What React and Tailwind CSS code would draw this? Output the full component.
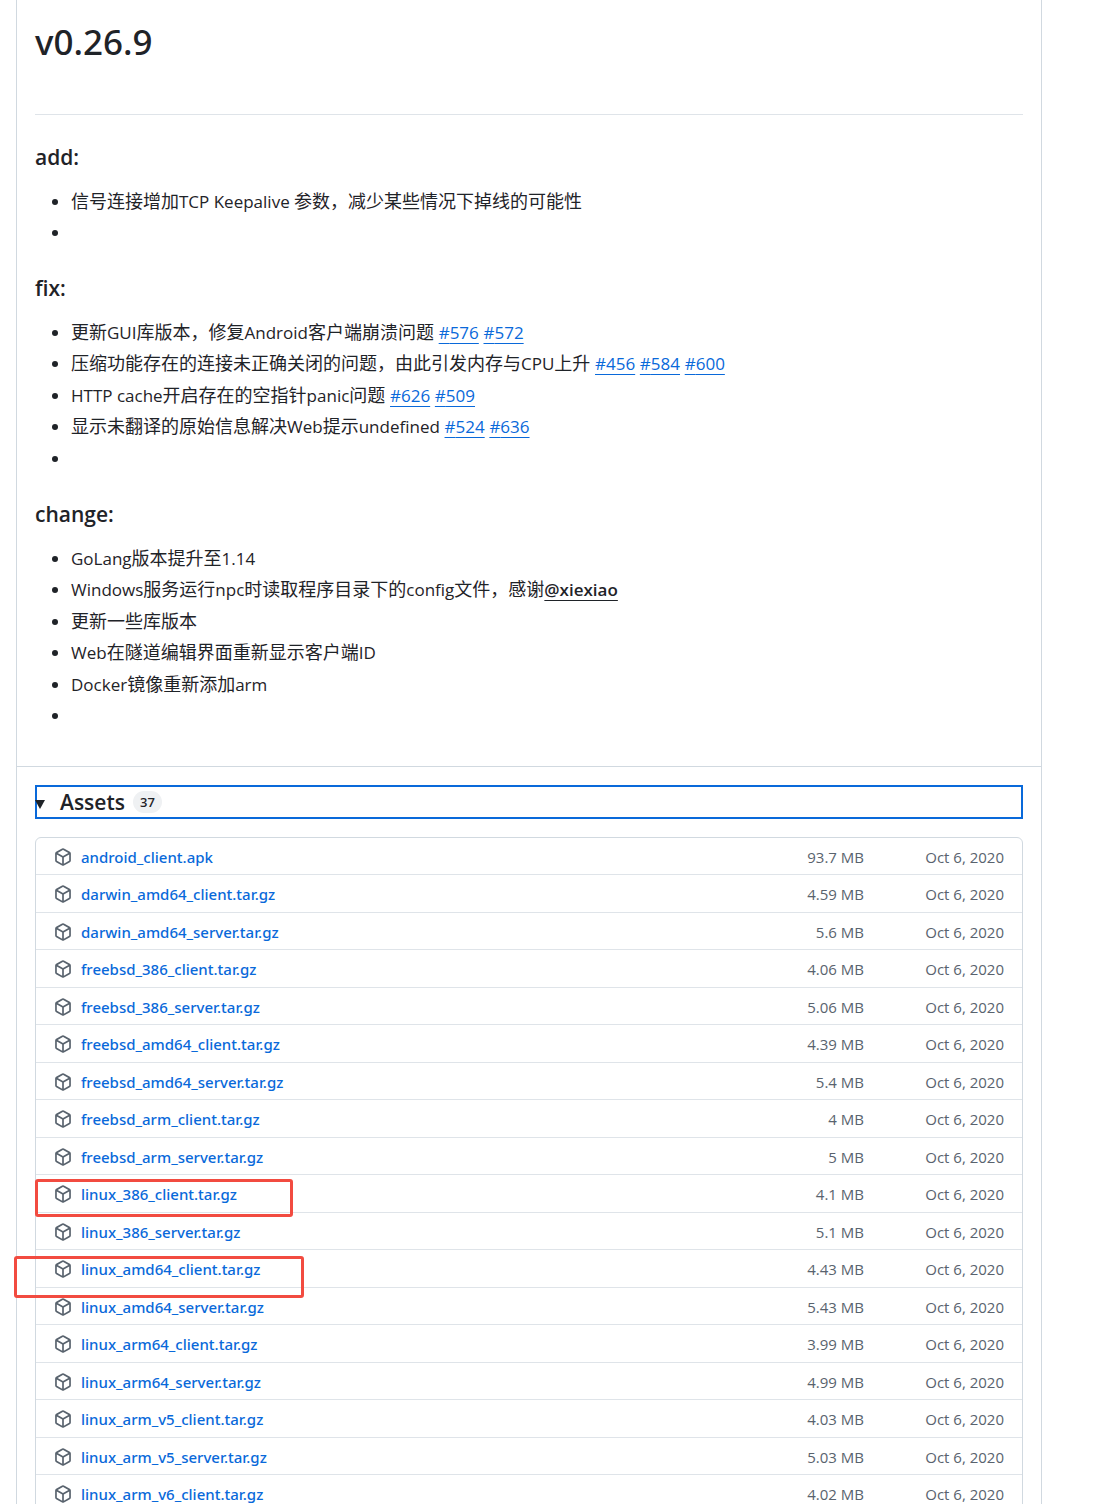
import React from 'react';

const sections = [
  {
    title: 'add:',
    items: [{ text: '信号连接增加TCP Keepalive 参数，减少某些情况下掉线的可能性' }, { text: '' }],
  },
  {
    title: 'fix:',
    items: [
      { text: '更新GUI库版本，修复Android客户端崩溃问题', issues: [576, 572] },
      { text: '压缩功能存在的连接未正确关闭的问题，由此引发内存与CPU上升', issues: [456, 584, 600] },
      { text: 'HTTP cache开启存在的空指针panic问题', issues: [626, 509] },
      { text: '显示未翻译的原始信息解决Web提示undefined', issues: [524, 636] },
      { text: '' },
    ],
  },
  {
    title: 'change:',
    items: [
      { text: 'GoLang版本提升至1.14' },
      { text: 'Windows服务运行npc时读取程序目录下的config文件，感谢', mention: '@xiexiao' },
      { text: '更新一些库版本' },
      { text: 'Web在隧道编辑界面重新显示客户端ID' },
      { text: 'Docker镜像重新添加arm' },
      { text: '' },
    ],
  },
];

const assets = [
  { name: 'android_client.apk', size: '93.7 MB' },
  { name: 'darwin_amd64_client.tar.gz', size: '4.59 MB' },
  { name: 'darwin_amd64_server.tar.gz', size: '5.6 MB' },
  { name: 'freebsd_386_client.tar.gz', size: '4.06 MB' },
  { name: 'freebsd_386_server.tar.gz', size: '5.06 MB' },
  { name: 'freebsd_amd64_client.tar.gz', size: '4.39 MB' },
  { name: 'freebsd_amd64_server.tar.gz', size: '5.4 MB' },
  { name: 'freebsd_arm_client.tar.gz', size: '4 MB' },
  { name: 'freebsd_arm_server.tar.gz', size: '5 MB' },
  { name: 'linux_386_client.tar.gz', size: '4.1 MB', mark: '-left-px top-1 w-[258px] h-[38px]' },
  { name: 'linux_386_server.tar.gz', size: '5.1 MB' },
  { name: 'linux_amd64_client.tar.gz', size: '4.43 MB', mark: '-left-[22px] top-1.5 w-[290px] h-[42px]' },
  { name: 'linux_amd64_server.tar.gz', size: '5.43 MB' },
  { name: 'linux_arm64_client.tar.gz', size: '3.99 MB' },
  { name: 'linux_arm64_server.tar.gz', size: '4.99 MB' },
  { name: 'linux_arm_v5_client.tar.gz', size: '4.03 MB' },
  { name: 'linux_arm_v5_server.tar.gz', size: '5.03 MB' },
  { name: 'linux_arm_v6_client.tar.gz', size: '4.02 MB' },
];

function PackageIcon({ className }) {
  return (
    <svg viewBox="0 0 16 16" fill="currentColor" aria-hidden="true" className={className}>
      <path d="m8.878.392 5.25 3.045c.54.314.872.89.872 1.514v6.098a1.75 1.75 0 0 1-.872 1.514l-5.25 3.045a1.75 1.75 0 0 1-1.756 0l-5.25-3.045A1.75 1.75 0 0 1 1 11.049V4.951c0-.624.332-1.201.872-1.514L7.122.392a1.75 1.75 0 0 1 1.756 0ZM7.875 1.69l-4.63 2.685L8 7.133l4.755-2.758-4.63-2.685a.248.248 0 0 0-.25 0ZM2.5 5.677v5.372c0 .09.047.171.125.216l4.625 2.683V8.432Zm6.25 8.271 4.625-2.683a.25.25 0 0 0 .125-.216V5.677L8.75 8.432Z" />
    </svg>
  );
}

// latin runs are set a step smaller so they sit evenly with the chinese text
function MixedText({ text }) {
  return text.split(/([\x20-\x7e]+)/).map((part, i) =>
    i % 2 ? (
      <span key={i} className="text-[17px]">
        {part}
      </span>
    ) : (
      part
    )
  );
}

function NoteSection({ title, items }) {
  return (
    <section className="mt-[27px]">
      <h2 className="text-[21px] leading-[30px] font-semibold">{title}</h2>
      <ul className="mt-4 list-disc pl-9">
        {items.map((item, i) => (
          <li key={i} className="h-[27px] leading-[27px] even:mt-1 odd:mt-[5px] first:mt-0">
            <MixedText text={item.text} />
            {item.issues?.map((n) => (
              <React.Fragment key={n}>
                {' '}
                <a href={`#${n}`} className="text-[17px] text-[#0969da] underline decoration-1 underline-offset-4">
                  #{n}
                </a>
              </React.Fragment>
            ))}
            {item.mention && (
              <a href="#xiexiao" className="text-[17px] font-semibold underline decoration-1 underline-offset-4">
                {item.mention}
              </a>
            )}
          </li>
        ))}
      </ul>
    </section>
  );
}

function AssetRow({ name, size, mark }) {
  return (
    <tr className="group odd:not-first:h-[37px] even:h-[38px] first:h-9">
      <td className="relative border-t border-[#dfe4e9] p-0 pt-px pl-[18px] group-first:border-t-0">
        <div className="flex items-center">
          <PackageIcon className="size-[18px] shrink-0 text-[#59636e]" />
          <a href={`#${name}`} className="ml-[9px] font-['Noto_Sans',sans-serif] leading-5 font-medium text-[#0969da]">
            {name}
          </a>
        </div>
        {mark && (
          <span className={`pointer-events-none absolute z-10 rounded-[3px] border-3 border-[#f24b40] ${mark}`} />
        )}
      </td>
      <td className="border-t border-[#dfe4e9] p-0 pt-px text-right text-[#59636e] group-first:border-t-0">{size}</td>
      <td className="w-[158px] border-t border-[#dfe4e9] p-0 pt-px pr-[18px] text-right text-[#59636e] group-first:border-t-0">
        Oct 6, 2020
      </td>
    </tr>
  );
}

function App() {
  return (
    <div className="bg-white font-['Open_Sans','Noto_Sans_CJK_SC',sans-serif] text-lg text-[#1f2328]">
      <main className="ml-4 mr-16 min-h-screen border-x border-[#d1d9e0]">
        <div className="px-[18px] pt-5 pb-[37px]">
          <h1 className="font-['Noto_Sans',sans-serif] text-[35px] leading-[43px] font-medium">v0.26.9</h1>
          <hr className="mt-[51px] border-[#dfe4e9]" />
          {sections.map((s) => (
            <NoteSection key={s.title} {...s} />
          ))}
        </div>
        <div className="border-t border-[#d1d9e0] p-[18px]">
          <details open>
            <summary className="flex h-[34px] list-none items-center border-2 border-[#0969da]">
              <svg viewBox="0 0 10 10" className="-ml-0.5 mt-1 size-2.5" fill="currentColor">
                <path d="M0 1h10L5 10z" />
              </svg>
              <span className="ml-[15px] text-[21px] leading-7 font-semibold">Assets</span>
              <span className="ml-2 rounded-full bg-[#eff1f3] px-[7px] text-[13px] leading-[22px] font-semibold">
                37
              </span>
            </summary>
            <div className="mt-[18px] rounded-md border border-[#d1d9e0]">
              <table className="w-full border-separate border-spacing-0 text-[15px] leading-5">
                <tbody>
                  {assets.map((a) => (
                    <AssetRow key={a.name} {...a} />
                  ))}
                </tbody>
              </table>
            </div>
          </details>
        </div>
      </main>
    </div>
  );
}

export default App;
